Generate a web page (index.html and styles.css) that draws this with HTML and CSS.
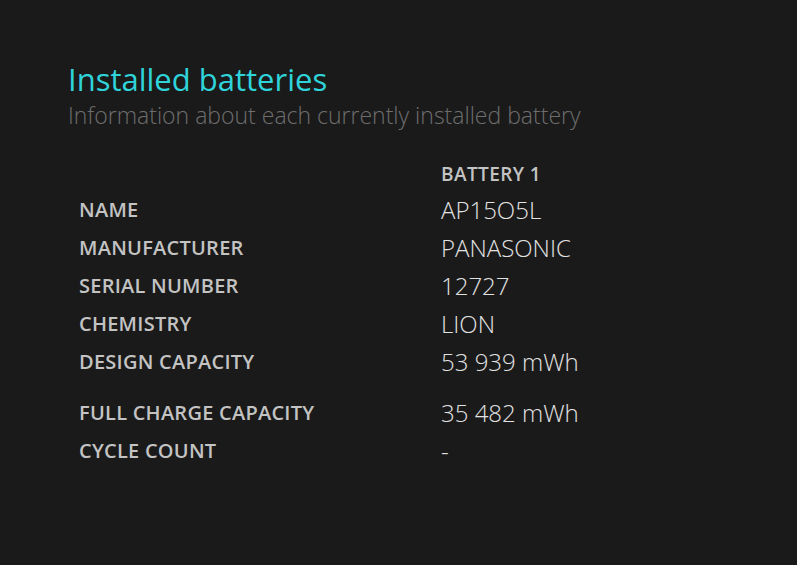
FILE: index.html
```html
<!DOCTYPE html>
<html>
<head>
<meta charset="utf-8">
<link rel="stylesheet" href="styles.css">
</head>
<body>
<main class="page">
  <header class="head">
    <h1 class="title">Installed batteries</h1>
    <p class="subtitle">Information about each currently installed battery</p>
  </header>
  <div class="table">
    <div class="row header-row">
      <span class="label"></span>
      <span class="col-head">BATTERY 1</span>
    </div>
    <div class="row">
      <span class="label">NAME</span>
      <span class="value">AP15O5L</span>
    </div>
    <div class="row">
      <span class="label">MANUFACTURER</span>
      <span class="value">PANASONIC</span>
    </div>
    <div class="row">
      <span class="label">SERIAL NUMBER</span>
      <span class="value">12727</span>
    </div>
    <div class="row">
      <span class="label">CHEMISTRY</span>
      <span class="value">LION</span>
    </div>
    <div class="row">
      <span class="label">DESIGN CAPACITY</span>
      <span class="value">53 939 mWh</span>
    </div>
    <div class="row spaced">
      <span class="label">FULL CHARGE CAPACITY</span>
      <span class="value">35 482 mWh</span>
    </div>
    <div class="row">
      <span class="label">CYCLE COUNT</span>
      <span class="value">-</span>
    </div>
  </div>
</main>
</body>
</html>
```

FILE: styles.css
```css
html, body {
  margin: 0;
  padding: 0;
  background: #1a1a1a;
  height: 100%;
}
body {
  font-family: "Open Sans", "Noto Sans", sans-serif;
}
.page {
  padding: 58px 0 0 68px;
}
.title {
  margin: 0;
  font-size: 31px;
  font-weight: 500;
  line-height: 42px;
  color: #2fd4da;
}
.subtitle {
  margin: 0;
  font-size: 23px;
  font-weight: 300;
  line-height: 30px;
  color: #6e6e6e;
}
.table {
  margin-top: 28px;
  display: flex;
  flex-direction: column;
}
.row {
  display: grid;
  grid-template-columns: 373px 1fr;
  align-items: center;
  height: 38px;
}
.header-row {
  height: 32px;
}
.spaced {
  margin-top: 13px;
}
.label {
  padding-left: 11px;
  font-size: 20px;
  font-weight: 600;
  color: #c3c3c3;
  letter-spacing: 0.25px;
}
.col-head {
  font-size: 19px;
  font-weight: 600;
  color: #c3c3c3;
  letter-spacing: 0.4px;
}
.value {
  font-size: 24px;
  font-weight: 300;
  color: #e2e2e2;
}
```
